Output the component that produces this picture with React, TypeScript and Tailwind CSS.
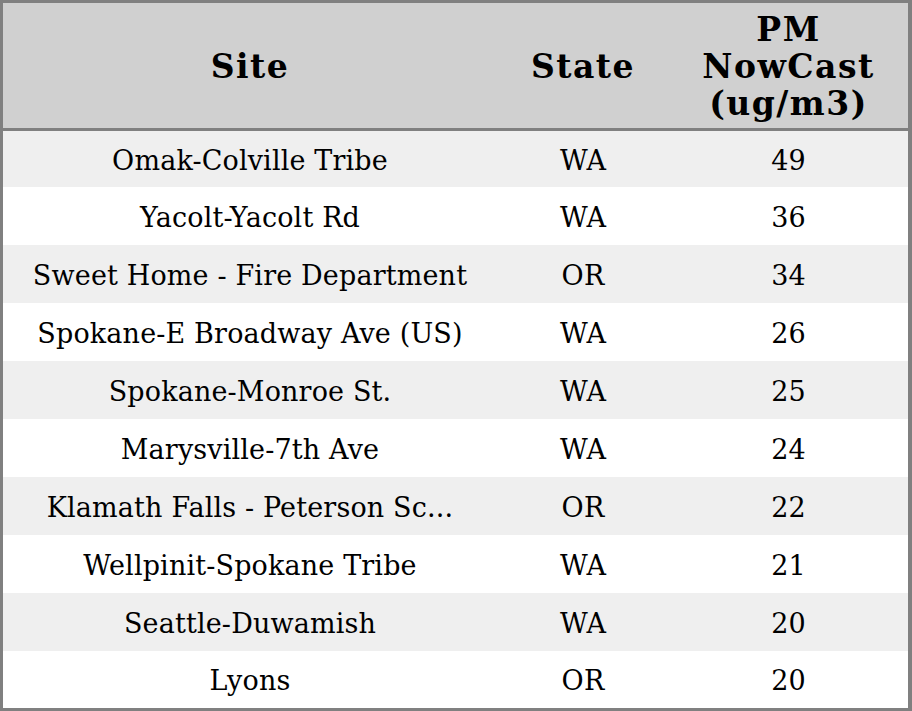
import React from 'react';

type Row = { site: string; state: string; pm: number };

const rows: Row[] = [
  { site: 'Omak-Colville Tribe', state: 'WA', pm: 49 },
  { site: 'Yacolt-Yacolt Rd', state: 'WA', pm: 36 },
  { site: 'Sweet Home - Fire Department', state: 'OR', pm: 34 },
  { site: 'Spokane-E Broadway Ave (US)', state: 'WA', pm: 26 },
  { site: 'Spokane-Monroe St.', state: 'WA', pm: 25 },
  { site: 'Marysville-7th Ave', state: 'WA', pm: 24 },
  { site: 'Klamath Falls - Peterson Sc...', state: 'OR', pm: 22 },
  { site: 'Wellpinit-Spokane Tribe', state: 'WA', pm: 21 },
  { site: 'Seattle-Duwamish', state: 'WA', pm: 20 },
  { site: 'Lyons', state: 'OR', pm: 20 },
];

export default function App() {
  return (
    <div className="w-[912px] h-[711px] bg-white font-['DejaVu_Serif',serif] text-black">
      <div className="w-[912px] h-[711px] border-t-[3px] border-l-[3px] border-b-[3px] border-r-4 border-[#808080] flex flex-col">
        {/* header */}
        <div className="grid grid-cols-[494px_172px_239px] h-[125px] shrink-0 bg-[#d0d0d0] border-b-[3px] border-[#808080] box-content font-bold text-[33px] leading-[37px] tracking-[1.5px]">
          <div className="flex items-center justify-center pt-[2px]">Site</div>
          <div className="flex items-center justify-center pt-[2px]">State</div>
          <div className="flex items-center justify-center text-center pt-[2px]">
            PM
            <br />
            NowCast
            <br />
            (ug/m3)
          </div>
        </div>

        {/* rows */}
        {rows.map((r, i) => (
          <div
            key={i}
            className={
              'grid grid-cols-[494px_172px_239px] shrink-0 pt-[4px] text-[27px] tracking-[0.15px] ' +
              (i % 2 === 0 ? 'bg-[#efefef] ' : 'bg-white ') +
              (i === 0 ? 'h-[56px]' : i === rows.length - 1 ? 'h-[57px]' : 'h-[58px]')
            }
          >
            <div className="flex items-center justify-center whitespace-nowrap">{r.site}</div>
            <div className="flex items-center justify-center">{r.state}</div>
            <div className="flex items-center justify-center">{r.pm}</div>
          </div>
        ))}
      </div>
    </div>
  );
}
